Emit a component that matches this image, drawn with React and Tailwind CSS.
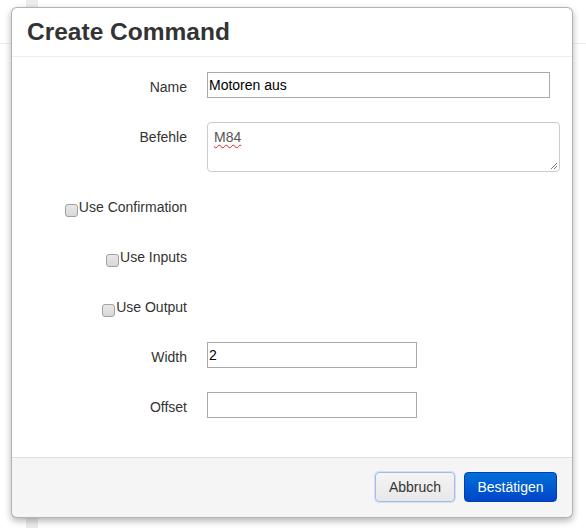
import React from "react";

function Row({ label, children }) {
  return (
    <div className="flex min-h-[30px] mb-[20px]">
      <div className="w-[160px] shrink-0 pt-[5px] text-right leading-[20px] text-[14px] text-[#333]">
        {label}
      </div>
      <div className="ml-[20px]">{children}</div>
    </div>
  );
}

function CheckRow({ label }) {
  return (
    <div className="flex mb-[20px] h-[30px]">
      <label className="w-[160px] shrink-0 pt-[5px] flex justify-end items-start leading-[20px] text-[14px] text-[#333]">
        <span className="mt-[7px] mr-[1px] inline-block w-[13px] h-[13px] border border-[#a0a0a0] rounded-[3px] bg-[linear-gradient(#e8e8e8,#d8d8d8)]" />
        <span>{label}</span>
      </label>
    </div>
  );
}

export default function App() {
  return (
    <div className="relative w-[586px] h-[528px] overflow-hidden bg-white font-['Liberation_Sans',Arial,sans-serif]">
      {/* page behind the dialog */}
      <div className="absolute left-[26px] top-0 w-[12px] h-full bg-[#ebebeb]" />
      <div className="absolute left-0 right-0 top-[43px] h-px bg-[#eeeeee]" />

      {/* dialog */}
      <div className="absolute left-[11px] top-[7px] w-[562px] bg-white border border-black/30 rounded-[6px] shadow-[0_3px_7px_rgba(0,0,0,0.3)]">
        <div className="px-[15px] py-[9px] border-b border-[#eeeeee]">
          <h3 className="text-[24.5px] leading-[30px] font-bold text-[#333]">Create Command</h3>
        </div>

        <div className="p-[15px]">
          <Row label="Name">
            <input
              defaultValue="Motoren aus"
              className="block w-[343px] h-[26px] border border-[#a9a9a9] px-[1px] text-[14px] text-black outline-none"
            />
          </Row>
          <Row label="Befehle">
            <div className="relative w-[353px] h-[50px] border border-[#cccccc] rounded-[4px] px-[6px] py-[4px] leading-[20px] text-[14px] text-[#555]">
              <span className="underline decoration-wavy decoration-[#e02020] decoration-1 underline-offset-[2px]">M84</span>
              <svg className="absolute right-[1px] bottom-[1px]" width="8" height="8" viewBox="0 0 8 8">
                <path d="M7 1 L1 7 M7 4 L4 7" stroke="#777" strokeWidth="1" />
              </svg>
            </div>
          </Row>
          <CheckRow label="Use Confirmation" />
          <CheckRow label="Use Inputs" />
          <CheckRow label="Use Output" />
          <Row label="Width">
            <input
              defaultValue="2"
              className="block w-[210px] h-[26px] border border-[#a9a9a9] px-[1px] text-[14px] text-black outline-none"
            />
          </Row>
          <Row label="Offset">
            <input
              defaultValue=""
              className="block w-[210px] h-[26px] border border-[#a9a9a9] px-[1px] text-[14px] text-black outline-none"
            />
          </Row>
        </div>

        <div className="flex justify-end gap-[9px] border-t border-[#dddddd] bg-[#f5f5f5] rounded-b-[6px] px-[15px] pt-[14px] pb-[15px]">
          <button className="w-[80px] h-[30px] rounded-[4px] border border-[#9dbdf0] bg-[linear-gradient(#f4f4f4,#e8e8e8)] text-[14px] leading-[20px] text-[#333] shadow-[0_0_0_1px_rgba(120,160,230,0.25)]">
            Abbruch
          </button>
          <button className="w-[93px] h-[30px] rounded-[4px] border border-[#0040b0] bg-[linear-gradient(#0070d8,#0045c8)] text-[14px] leading-[20px] text-white">
            Bestätigen
          </button>
        </div>
      </div>
    </div>
  );
}
